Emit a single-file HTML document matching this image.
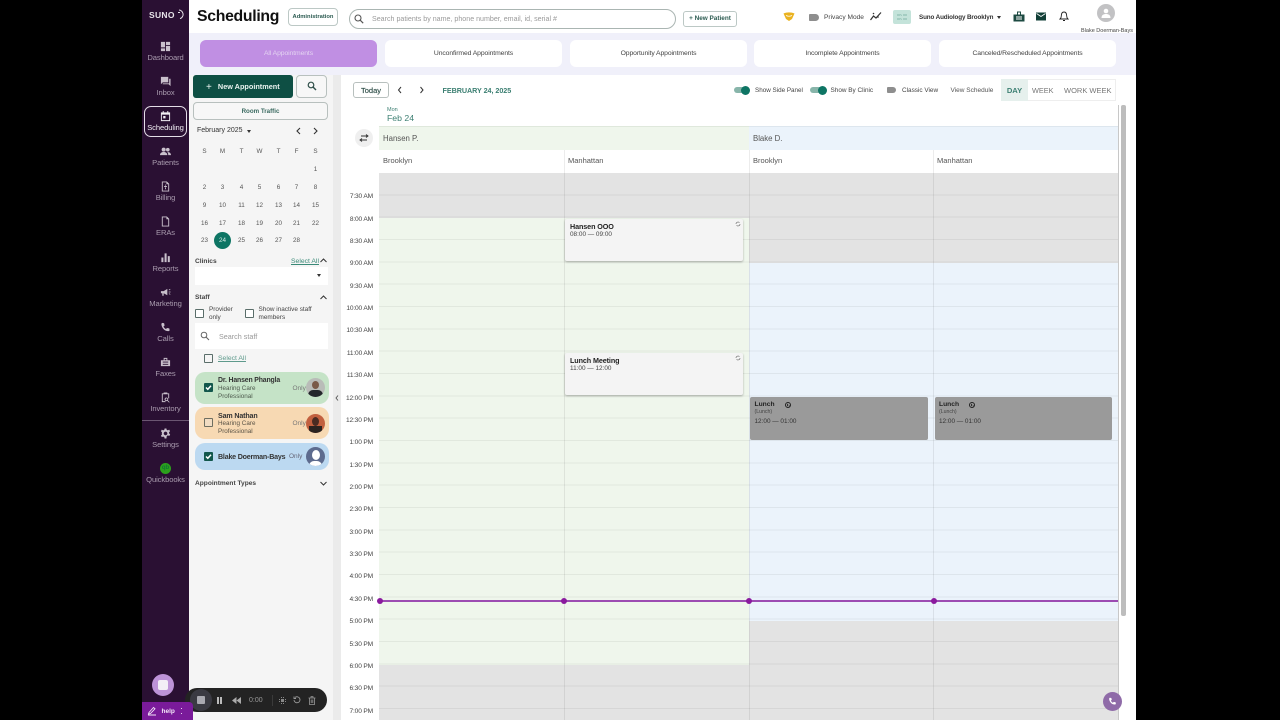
<!DOCTYPE html>
<html><head><meta charset="utf-8"><style>
*{box-sizing:border-box}
html,body{margin:0;padding:0;width:1280px;height:720px;overflow:hidden;background:#000;font-family:"Liberation Sans",sans-serif}
.a{position:absolute;white-space:nowrap}
#root{position:absolute;left:0;top:0;width:1280px;height:720px;overflow:hidden;background:#000;filter:blur(.3px)}
.nav{position:absolute;left:142px;width:47px;text-align:center;color:#a99bae;font-size:7.6px;letter-spacing:-.1px}
.nav svg{display:block;margin:0 auto 1px;width:11px;height:11px;fill:#c9c0cc}
.tab{position:absolute;top:40px;height:27px;border-radius:6px;background:#fff;text-align:center;font-size:6.8px;line-height:28px;color:#444;letter-spacing:-.1px}
.t{position:absolute;left:341px;width:32px;text-align:right;font-size:6.6px;color:#444;letter-spacing:-.15px;white-space:nowrap;margin-top:.6px}
.d{position:absolute;width:19px;text-align:center;font-size:6.3px;color:#555;margin-top:1px}
.cb{position:absolute;width:9px;height:9px;border:1.2px solid #5a6e6a;border-radius:1px;background:#fff}
.ck{background:#12574c;border-color:#12574c;color:#fff}
.ck svg{position:absolute;left:0;top:0;width:7px;height:7px;fill:none;stroke:#fff;stroke-width:1.5}
.staff{position:absolute;left:195px;width:134px;border-radius:10px}
.dot{position:absolute;top:598px;width:6px;height:6px;border-radius:50%;background:#8a1a9e}
.ev{position:absolute;border-radius:2px}
.vl{position:absolute;top:150px;width:1px;height:570px;background:rgba(0,0,0,.075)}
</style></head><body><div id="root">

<!-- sidebar -->
<div class="a" style="left:142px;top:0;width:47px;height:720px;background:#2a1033"></div>
<div class="a" style="left:149px;top:10px;font-size:8.5px;font-weight:bold;color:#e8e4ea;letter-spacing:.3px">SUNO</div>
<svg class="a" style="left:176px;top:9px" width="9" height="11" viewBox="0 0 9 11"><path d="M3 1a4.4 4.4 0 0 1 1 8.600M2 3.500h2" fill="none" stroke="#e8e4ea" stroke-width="1"/></svg>

<div class="nav" style="top:41px"><svg viewBox="0 0 12 12"><path d="M1 1h4.500v6H1zM6.500 1H11v3.500H6.500zM1 8h4.500v3H1zM6.500 5.500H11V11H6.500z"/></svg>Dashboard</div>
<div class="nav" style="top:76px"><svg viewBox="0 0 12 12"><path d="M1 1h8v6H3L1 9zM10 3h1.500v8L9.500 9H3V8h7z"/></svg>Inbox</div>
<div class="a" style="left:144px;top:106px;width:43px;height:31px;border:1.3px solid #e4dde8;border-radius:7px"></div>
<div class="nav" style="top:111px;color:#f2eef4"><svg viewBox="0 0 12 12" style="fill:#f2eef4"><path d="M3 0h1v1.500h4V0h1v1.500h2V11H1V1.500h2zM2 4v6h8V4zm1.500 1.500h2.500V8H3.500z"/></svg>Scheduling</div>
<div class="nav" style="top:146px"><svg viewBox="0 0 12 12"><circle cx="4" cy="4" r="2.200"/><circle cx="8.500" cy="4" r="2"/><path d="M0 10c0-2.500 2-3.500 4-3.500S8 7.500 8 10zM9 10c0-1.500-.4-2.500-1-3.300 2-.3 4 .8 4 3.300z"/></svg>Patients</div>
<div class="nav" style="top:181px"><svg viewBox="0 0 12 12"><path d="M2 .5h5.500L10 3v8.500H2zM3 1.500v9h6V3.500H7v-2z"/><path d="M5.500 4h1v1h-1zM4.500 5.500h3v1h-3zM5.500 7h1v2h-1z"/></svg>Billing</div>
<div class="nav" style="top:216px"><svg viewBox="0 0 12 12"><path d="M2 .5h5.500L10 3v8.500H2zM3 1.500v9h6V3.500H7v-2z"/></svg>ERAs</div>
<div class="nav" style="top:252px"><svg viewBox="0 0 12 12"><path d="M1.500 6h2.200v5H1.500zM5 1.500h2.200V11H5zM8.500 4.500h2.200V11H8.500z"/></svg>Reports</div>
<div class="nav" style="top:287px"><svg viewBox="0 0 12 12"><path d="M1 4.500h3L8 2v7L4 6.800v2.700H2.500V6.800H1zM9.500 3l1.500-1 .4.700-1.500 1zM9.500 5h2v.8h-2zM9.500 7.500l.4-.7 1.500 1-.4.700z"/></svg>Marketing</div>
<div class="nav" style="top:322px"><svg viewBox="0 0 12 12"><path d="M2.500 1l2 .4.500 2.500-1.200 1c.6 1.300 1.500 2.200 2.800 2.800l1-1.200 2.500.5.400 2c-.2.800-1 1-1.600 1C5 10 2 6.500 1.500 2.600c0-.7.400-1.400 1-1.600z"/></svg>Calls</div>
<div class="nav" style="top:357px"><svg viewBox="0 0 12 12"><path d="M4 1h4v2.500h3V10H1V3.500h3zM5 2v1.500h2V2zM3 5v1h6V5zM3 7.500v1h6v-1z"/></svg>Faxes</div>
<div class="nav" style="top:392px"><svg viewBox="0 0 12 12"><path d="M2 1.500h2V.500h4v1h2V7H9V2.500H3v7.500h3v1H2zM7 6a2 2 0 1 1-.1 0zM7 7a1 1 0 1 0 .1 0zM8.500 9l2 2-.6.600-2-2z"/></svg>Inventory</div>
<div class="a" style="left:142px;top:420px;width:47px;height:1px;background:#6b5672"></div>
<div class="nav" style="top:428px"><svg viewBox="0 0 12 12"><path fill-rule="evenodd" d="M5 .5h2l.3 1.500 1.300.6L10 1.800l1 1.700-1.100 1 .1 1.500 1.100 1-1 1.700-1.400-.7-1.300.7L7 11.500H5l-.3-1.500-1.300-.7-1.400.7-1-1.700 1.100-1L2 6l.1-1.500-1.100-1 1-1.700 1.400.8L4.700 2zM6 4a2 2 0 1 0 .1 0z"/></svg>Settings</div>
<div class="a" style="left:160px;top:463px;width:11px;height:11px;border-radius:50%;background:#2ca01c;color:#173;font-size:6px;line-height:11px;text-align:center;font-weight:bold">qb</div>
<div class="nav" style="top:475px">Quickbooks</div>

<!-- main white -->
<div class="a" style="left:189px;top:0;width:947px;height:720px;background:#fff"></div>
<div class="a" style="left:189px;top:33px;width:947px;height:42px;background:#f0f0fa"></div>
<!-- left panel -->
<div class="a" style="left:189px;top:75px;width:144px;height:645px;background:#f5f5f5"></div>
<div class="a" style="left:333px;top:75px;width:8px;height:645px;background:#ebebeb"></div>

<!-- top bar -->
<div class="a" style="left:197px;top:8px;font-size:15.800px;font-weight:bold;color:#111;letter-spacing:-.3px">Scheduling</div>
<div class="a" style="left:288px;top:8px;width:50px;height:18px;border:1px solid #bcc8c5;border-radius:4px;text-align:center;font-size:5.800px;line-height:16px;color:#2d5c52;font-weight:bold">Administration</div>
<div class="a" style="left:349px;top:9px;width:327px;height:20px;border:1px solid #aab5b2;border-radius:10px;background:#fff"></div>
<svg class="a" style="left:354px;top:14px" width="10" height="10" viewBox="0 0 10 10"><circle cx="4" cy="4" r="3" fill="none" stroke="#555" stroke-width="1.100"/><path d="M6.200 6.200l3 3" stroke="#555" stroke-width="1.200"/></svg>
<div class="a" style="left:372px;top:14.500px;font-size:7.100px;color:#9a9a9a">Search patients by name, phone number, email, id, serial #</div>
<div class="a" style="left:683px;top:11px;width:54px;height:16px;border:1px solid #bcc8c5;border-radius:3px;text-align:center;font-size:6.400px;line-height:14.500px;color:#2d5c52;font-weight:bold">+ New Patient</div>
<svg class="a" style="left:783px;top:12px" width="12" height="10" viewBox="0 0 12 10"><path d="M.5 1.500C4 0 8 0 11.500 1.500L9 7 6 9 3 7z" fill="#eab21f"/><path d="M3 3.500c2 1 4 1 6 0" stroke="#fff" fill="none" stroke-width=".7"/></svg>
<div class="a" style="left:809px;top:14px;width:10px;height:7px;border-radius:1px 4px 4px 1px;background:#8e8e8e"></div>
<div class="a" style="left:824px;top:14px;font-size:6.600px;color:#444">Privacy Mode</div>
<svg class="a" style="left:870px;top:11px" width="12" height="10" viewBox="0 0 12 10"><path d="M.5 9l3-4 2.500 2L11 1.500" stroke="#333" fill="none" stroke-width="1.200"/><circle cx="3.500" cy="2.500" r=".8" fill="#333"/><circle cx="8" cy="6" r=".8" fill="#333"/></svg>
<div class="a" style="left:893px;top:10px;width:18px;height:14px;background:#c4e3da;border-radius:2px"></div>
<svg class="a" style="left:897px;top:14px" width="10" height="6" viewBox="0 0 10 6"><path d="M0 1h3M0 5h3M6 1h4M6 5h4M3.500 .5l1 1M3.500 4.500l1 1" stroke="#6ea99b" fill="none" stroke-width=".8"/></svg>
<div class="a" style="left:919px;top:14px;font-size:6.300px;font-weight:bold;color:#333;letter-spacing:-.12px">Suno Audiology Brooklyn</div>
<div class="a" style="left:997px;top:16px;width:0;height:0;border:2.500px solid transparent;border-top:3px solid #333"></div>
<svg class="a" style="left:1013px;top:11px" width="12" height="11" viewBox="0 0 12 11"><path d="M4 .5h4v3h3.500v7H.5v-7H4zM5 1.500v2h2v-2zM3 5.500v1h6v-1zM3 7.500v1h6v-1z" fill="#1d4a42" fill-rule="evenodd"/></svg>
<svg class="a" style="left:1036px;top:12px" width="10" height="9" viewBox="0 0 10 9"><path d="M0 .5h10V8.500H0z" fill="#123f37"/><path d="M.5 1.500L5 4.500l4.500-3" stroke="#fff" fill="none" stroke-width=".8"/></svg>
<svg class="a" style="left:1059px;top:11px" width="10" height="11" viewBox="0 0 10 11"><path d="M5 1C3 1 2.300 3 2.300 5c0 1.500-.8 2.500-1.300 3h8c-.5-.5-1.300-1.500-1.300-3C7.700 3 7 1 5 1zM4 9.500h2" fill="none" stroke="#222" stroke-width=".9"/></svg>
<div class="a" style="left:1097px;top:4px;width:18px;height:18px;border-radius:50%;background:#c2c2c4"></div>
<svg class="a" style="left:1100px;top:7px" width="12" height="12" viewBox="0 0 12 12"><circle cx="6" cy="4" r="2.300" fill="#fff"/><path d="M1.500 11c0-3 2-4 4.500-4s4.500 1 4.500 4z" fill="#fff"/></svg>
<div class="a" style="left:1081px;top:28px;font-size:5.500px;color:#444">Blake Doerman-Bays</div>

<!-- tabs -->
<div class="tab" style="left:200px;width:177px;background:#c08fe3;color:#e3d3f1">All Appointments</div>
<div class="tab" style="left:385px;width:177px">Unconfirmed Appointments</div>
<div class="tab" style="left:570px;width:177px">Opportunity Appointments</div>
<div class="tab" style="left:754px;width:177px">Incomplete Appointments</div>
<div class="tab" style="left:939px;width:177px">Canceled/Rescheduled Appointments</div>

<!-- left panel content -->
<div class="a" style="left:193px;top:75px;width:100px;height:23px;background:#0e4f44;border-radius:3px;color:#e9f2ef;font-size:7.300px;font-weight:bold;line-height:24px;padding-left:13px"><span style="font-size:10px;font-weight:normal;position:relative;top:.5px">+</span>&nbsp;&nbsp;&nbsp;New Appointment</div>
<div class="a" style="left:296px;top:75px;width:31px;height:23px;border:1px solid #b8c0be;border-radius:4px;background:#f7f7f7"></div>
<svg class="a" style="left:307px;top:81px" width="10" height="10" viewBox="0 0 10 10"><circle cx="4" cy="4" r="2.800" fill="none" stroke="#2f4f49" stroke-width="1.200"/><path d="M6 6l3 3" stroke="#2f4f49" stroke-width="1.400"/></svg>
<div class="a" style="left:193px;top:102px;width:135px;height:18px;border:1px solid #b8c0be;border-radius:4px;background:#f7f7f7;text-align:center;font-size:6.200px;line-height:17px;font-weight:bold;color:#3a6a60">Room Traffic</div>

<div class="a" style="left:197px;top:127px;font-size:7px;color:#333">February 2025</div>
<div class="a" style="left:247px;top:129.500px;width:0;height:0;border:2.500px solid transparent;border-top:3px solid #333"></div>
<svg class="a" style="left:295px;top:127px" width="26" height="8" viewBox="0 0 26 8"><path d="M5 1L2 4l3 3M19 1l3 3-3 3" fill="none" stroke="#333" stroke-width="1.100"/></svg>

<div class="d" style="left:195px;top:147px">S</div><div class="d" style="left:213px;top:147px">M</div><div class="d" style="left:232px;top:147px">T</div><div class="d" style="left:250px;top:147px">W</div><div class="d" style="left:269px;top:147px">T</div><div class="d" style="left:287px;top:147px">F</div><div class="d" style="left:306px;top:147px">S</div>
<div class="d" style="left:306px;top:165px">1</div>
<div class="d" style="left:195px;top:183px">2</div><div class="d" style="left:213px;top:183px">3</div><div class="d" style="left:232px;top:183px">4</div><div class="d" style="left:250px;top:183px">5</div><div class="d" style="left:269px;top:183px">6</div><div class="d" style="left:287px;top:183px">7</div><div class="d" style="left:306px;top:183px">8</div>
<div class="d" style="left:195px;top:201px">9</div><div class="d" style="left:213px;top:201px">10</div><div class="d" style="left:232px;top:201px">11</div><div class="d" style="left:250px;top:201px">12</div><div class="d" style="left:269px;top:201px">13</div><div class="d" style="left:287px;top:201px">14</div><div class="d" style="left:306px;top:201px">15</div>
<div class="d" style="left:195px;top:218.500px">16</div><div class="d" style="left:213px;top:218.500px">17</div><div class="d" style="left:232px;top:218.500px">18</div><div class="d" style="left:250px;top:218.500px">19</div><div class="d" style="left:269px;top:218.500px">20</div><div class="d" style="left:287px;top:218.500px">21</div><div class="d" style="left:306px;top:218.500px">22</div>
<div class="d" style="left:195px;top:236px">23</div>
<div class="a" style="left:214px;top:232px;width:17px;height:17px;border-radius:50%;background:#0e7564"></div>
<div class="d" style="left:213px;top:236px;color:#d8eee9">24</div><div class="d" style="left:232px;top:236px">25</div><div class="d" style="left:250px;top:236px">26</div><div class="d" style="left:269px;top:236px">27</div><div class="d" style="left:287px;top:236px">28</div>

<div class="a" style="left:195px;top:257.500px;font-size:6.600px;font-weight:bold;color:#444">Clinics</div>
<div class="a" style="left:291px;top:257.500px;font-size:6.800px;color:#3a8a78;text-decoration:underline">Select All</div>
<svg class="a" style="left:320px;top:258px" width="7" height="5" viewBox="0 0 7 5"><path d="M.5 4l3-3 3 3" fill="none" stroke="#333" stroke-width="1"/></svg>
<div class="a" style="left:195px;top:267px;width:133px;height:18px;background:#fff"></div>
<div class="a" style="left:317px;top:274px;width:0;height:0;border:2.500px solid transparent;border-top:3px solid #333"></div>

<div class="a" style="left:195px;top:294px;font-size:6.600px;font-weight:bold;color:#444">Staff</div>
<svg class="a" style="left:320px;top:295px" width="7" height="5" viewBox="0 0 7 5"><path d="M.5 4l3-3 3 3" fill="none" stroke="#333" stroke-width="1"/></svg>
<div class="cb" style="left:195px;top:309px"></div>
<div class="a" style="left:209px;top:305.500px;font-size:6.400px;line-height:8px;color:#444">Provider<br>only</div>
<div class="cb" style="left:244.500px;top:309px"></div>
<div class="a" style="left:258.500px;top:305.500px;font-size:6.400px;line-height:8px;color:#444">Show inactive staff<br>members</div>
<div class="a" style="left:195px;top:323px;width:133px;height:26px;background:#fff"></div>
<svg class="a" style="left:200px;top:331px" width="10" height="10" viewBox="0 0 10 10"><circle cx="4" cy="4" r="2.800" fill="none" stroke="#666" stroke-width="1"/><path d="M6 6l3 3" stroke="#666" stroke-width="1.100"/></svg>
<div class="a" style="left:219px;top:332px;font-size:7.200px;color:#999">Search staff</div>
<div class="cb" style="left:204px;top:354px;background:#f5f5f5"></div>
<div class="a" style="left:218px;top:355px;font-size:6.800px;color:#5e9a8c;text-decoration:underline">Select All</div>

<div class="staff" style="top:372px;height:32px;background:#c5e3c7"></div>
<div class="cb ck" style="left:204px;top:383px"><svg viewBox="0 0 7 7"><path d="M1 3.500l1.800 1.800L6 1.800"/></svg></div>
<div class="a" style="left:218px;top:377px;font-size:6.900px;font-weight:bold;color:#333;letter-spacing:-.15px">Dr. Hansen Phangla</div>
<div class="a" style="left:218px;top:385px;font-size:6.300px;line-height:8px;color:#4d5a4d">Hearing Care<br>Professional</div>
<div class="a" style="left:292.500px;top:384.500px;font-size:6.500px;color:#777">Only</div>
<div class="a" style="left:306px;top:378px;width:19px;height:19px;border-radius:50%;background:#b9bcb8;overflow:hidden"><div style="position:absolute;left:6px;top:3px;width:7px;height:8px;border-radius:50%;background:#7a5a48"></div><div style="position:absolute;left:2px;top:12px;width:15px;height:8px;border-radius:5px 5px 0 0;background:#23272b"></div></div>

<div class="staff" style="top:407px;height:32px;background:#f7d9b3"></div>
<div class="cb" style="left:204px;top:418px;background:#f1dcc2;border-color:#6e6e60"></div>
<div class="a" style="left:218px;top:412px;font-size:7.100px;font-weight:bold;color:#333;letter-spacing:-.15px">Sam Nathan</div>
<div class="a" style="left:218px;top:420px;font-size:6.300px;line-height:8px;color:#5a5346">Hearing Care<br>Professional</div>
<div class="a" style="left:292.500px;top:419.500px;font-size:6.500px;color:#777">Only</div>
<div class="a" style="left:306px;top:414px;width:19px;height:19px;border-radius:50%;background:#c2603f;overflow:hidden"><div style="position:absolute;left:6px;top:3px;width:7px;height:9px;border-radius:50%;background:#4a2b22"></div><div style="position:absolute;left:3px;top:12px;width:13px;height:8px;background:#2b2320"></div></div>

<div class="staff" style="top:443px;height:27px;background:#bcd9f1"></div>
<div class="cb ck" style="left:204px;top:452px"><svg viewBox="0 0 7 7"><path d="M1 3.500l1.800 1.800L6 1.800"/></svg></div>
<div class="a" style="left:218px;top:452.500px;font-size:7.100px;font-weight:bold;color:#333;letter-spacing:-.2px">Blake Doerman-Bays</div>
<div class="a" style="left:289px;top:452.500px;font-size:6.500px;color:#667">Only</div>
<div class="a" style="left:306px;top:447px;width:19px;height:19px;border-radius:50%;background:#5d6b8e;overflow:hidden"><div style="position:absolute;left:5.500px;top:3px;width:8px;height:10px;border-radius:50%;background:#fff"></div><div style="position:absolute;left:3px;top:14px;width:13px;height:7px;border-radius:5px 5px 0 0;background:#fff"></div></div>

<div class="a" style="left:195px;top:479.500px;font-size:6.600px;font-weight:bold;color:#444">Appointment Types</div>
<svg class="a" style="left:320px;top:481px" width="7" height="5" viewBox="0 0 7 5"><path d="M.5 1l3 3 3-3" fill="none" stroke="#333" stroke-width="1"/></svg>
<svg class="a" style="left:335px;top:395px" width="4" height="6" viewBox="0 0 4 6"><path d="M3 .5L1 3l2 2.500" fill="none" stroke="#555" stroke-width=".9"/></svg>

<!-- calendar toolbar -->
<div class="a" style="left:353px;top:82px;width:36px;height:16px;border:1px solid #b8c0be;border-radius:3px;text-align:center;font-size:7.500px;line-height:15px;color:#2f4f49;-webkit-text-stroke:.15px #2f4f49">Today</div>
<svg class="a" style="left:397px;top:86px" width="28" height="8" viewBox="0 0 28 8"><path d="M4 1L1.500 4 4 7M23.500 1L26 4l-2.500 3" fill="none" stroke="#333" stroke-width="1"/></svg>
<div class="a" style="left:442.500px;top:86px;font-size:7.200px;color:#3c7f72;font-weight:bold;letter-spacing:-.05px">FEBRUARY 24, 2025</div>
<div class="a" style="left:734px;top:87px;width:13px;height:6px;border-radius:3px;background:#88b5aa"></div><div class="a" style="left:741px;top:85.500px;width:9px;height:9px;border-radius:50%;background:#0e7564"></div>
<div class="a" style="left:755px;top:87px;font-size:6.300px;color:#444">Show Side Panel</div>
<div class="a" style="left:810px;top:87px;width:13px;height:6px;border-radius:3px;background:#88b5aa"></div><div class="a" style="left:817.500px;top:85.500px;width:9px;height:9px;border-radius:50%;background:#0e7564"></div>
<div class="a" style="left:830.500px;top:87px;font-size:6.400px;color:#444">Show By Clinic</div>
<div class="a" style="left:887px;top:87px;width:9px;height:6px;border-radius:1px 3px 3px 1px;background:#8e8e8e"></div>
<div class="a" style="left:902px;top:87px;font-size:6.400px;color:#444">Classic View</div>
<div class="a" style="left:950.500px;top:87px;font-size:6.500px;color:#555">View Schedule</div>
<div class="a" style="left:1001px;top:79px;width:115px;height:22px;border:1px solid #eee"></div>
<div class="a" style="left:1001px;top:79px;width:27px;height:22px;background:#e6f0ed;text-align:center;font-size:7.600px;line-height:23px;font-weight:bold;color:#3c7f72">DAY</div>
<div class="a" style="left:1032px;top:86px;font-size:7.300px;color:#777">WEEK</div>
<div class="a" style="left:1064px;top:86px;font-size:7.500px;color:#777">WORK WEEK</div>

<div class="a" style="left:387px;top:106.500px;font-size:5.500px;color:#3c7f72">Mon</div>
<div class="a" style="left:387px;top:113px;font-size:8.700px;color:#3c7f72">Feb 24</div>

<!-- grid -->
<div class="a" style="left:379px;top:126px;width:370px;height:24px;background:#eff6ec;border-top:1px solid #dfe8dc"></div>
<div class="a" style="left:749px;top:126px;width:369px;height:24px;background:#ebf3fb;border-top:1px solid #dde6ee"></div>
<div class="a" style="left:383px;top:133.500px;font-size:7.800px;color:#555">Hansen P.</div>
<div class="a" style="left:753px;top:133.500px;font-size:7.800px;color:#555">Blake D.</div>
<div class="a" style="left:355px;top:129px;width:18px;height:18px;border-radius:50%;background:#efefef"></div>
<svg class="a" style="left:359px;top:134px" width="10" height="8" viewBox="0 0 10 8"><path d="M2 2h7M7 .5l2 1.500-2 1.500M8 6H1M3 4.500L1 6l2 1.500" fill="none" stroke="#333" stroke-width=".9"/></svg>
<div class="a" style="left:383px;top:156px;font-size:7.500px;color:#555">Brooklyn</div>
<div class="a" style="left:568px;top:156px;font-size:7.500px;color:#555">Manhattan</div>
<div class="a" style="left:753px;top:156px;font-size:7.500px;color:#555">Brooklyn</div>
<div class="a" style="left:937px;top:156px;font-size:7.500px;color:#555">Manhattan</div>

<div class="a" style="left:379px;top:173px;width:739px;height:547px;background:#e3e3e3"></div>
<div class="a" style="left:379px;top:218px;width:370px;height:447px;background:#eff6ec"></div>
<div class="a" style="left:749px;top:262.500px;width:369px;height:358px;background:#ebf3fb"></div>
<div class="a" style="left:379px;top:173.400px;width:739px;height:547px;background:repeating-linear-gradient(to bottom,transparent 0,transparent 21.330px,rgba(0,0,0,.06) 21.330px,rgba(0,0,0,.06) 22.330px)"></div>
<div class="vl" style="left:564px"></div><div class="vl" style="left:748.500px"></div><div class="vl" style="left:933px"></div>

<div class="t" style="top:192.500px">7:30 AM</div><div class="t" style="top:215px">8:00 AM</div><div class="t" style="top:237px">8:30 AM</div><div class="t" style="top:259.500px">9:00 AM</div><div class="t" style="top:282px">9:30 AM</div><div class="t" style="top:304.500px">10:00 AM</div><div class="t" style="top:326.500px">10:30 AM</div><div class="t" style="top:349px">11:00 AM</div><div class="t" style="top:371.500px">11:30 AM</div><div class="t" style="top:394px">12:00 PM</div><div class="t" style="top:416.500px">12:30 PM</div><div class="t" style="top:438.500px">1:00 PM</div><div class="t" style="top:461px">1:30 PM</div><div class="t" style="top:483.500px">2:00 PM</div><div class="t" style="top:505.500px">2:30 PM</div><div class="t" style="top:528px">3:00 PM</div><div class="t" style="top:550.500px">3:30 PM</div><div class="t" style="top:572.500px">4:00 PM</div><div class="t" style="top:595px">4:30 PM</div><div class="t" style="top:617.500px">5:00 PM</div><div class="t" style="top:640px">5:30 PM</div><div class="t" style="top:662px">6:00 PM</div><div class="t" style="top:684.500px">6:30 PM</div><div class="t" style="top:707px">7:00 PM</div>

<!-- events -->
<div class="ev" style="left:565px;top:219px;width:178px;height:42px;background:#f4f4f4;box-shadow:0 1px 2px rgba(0,0,0,.3)"></div>
<div class="a" style="left:570px;top:222px;font-size:7.200px;font-weight:bold;color:#222;letter-spacing:-.1px">Hansen OOO</div>
<div class="a" style="left:570px;top:231px;font-size:6.400px;color:#444">08:00 — 09:00</div>
<svg class="a" style="left:735px;top:221px" width="6" height="6" viewBox="0 0 6 6"><path d="M1 3a2 2 0 0 1 3.500-1.300M5 3a2 2 0 0 1-3.500 1.300" fill="none" stroke="#777" stroke-width=".7"/></svg>
<div class="ev" style="left:565px;top:353px;width:178px;height:42px;background:#f4f4f4;box-shadow:0 1px 2px rgba(0,0,0,.3)"></div>
<div class="a" style="left:570px;top:355.500px;font-size:7.200px;font-weight:bold;color:#222;letter-spacing:-.1px">Lunch Meeting</div>
<div class="a" style="left:570px;top:364.500px;font-size:6.400px;color:#444">11:00 — 12:00</div>
<svg class="a" style="left:735px;top:355px" width="6" height="6" viewBox="0 0 6 6"><path d="M1 3a2 2 0 0 1 3.500-1.300M5 3a2 2 0 0 1-3.500 1.300" fill="none" stroke="#777" stroke-width=".7"/></svg>

<div class="ev" style="left:750px;top:397px;width:178px;height:43px;background:#9a9a9a"></div>
<div class="a" style="left:754.500px;top:400.500px;font-size:6.700px;font-weight:bold;color:#222">Lunch</div>
<svg class="a" style="left:785px;top:401.500px" width="6" height="6" viewBox="0 0 6 6"><circle cx="3" cy="3" r="2.500" fill="#9a9a9a" stroke="#222"/><path d="M2 1.500l1.500 1.500-1.500 1.500zM4 3l.8 1-1 .8z" fill="#222"/></svg>
<div class="a" style="left:754.500px;top:409px;font-size:5.200px;color:#444">(Lunch)</div>
<div class="a" style="left:754.500px;top:418px;font-size:6.400px;color:#333">12:00 — 01:00</div>
<div class="ev" style="left:935px;top:397px;width:177px;height:43px;background:#9a9a9a"></div>
<div class="a" style="left:939px;top:400.500px;font-size:6.700px;font-weight:bold;color:#222">Lunch</div>
<svg class="a" style="left:969px;top:401.500px" width="6" height="6" viewBox="0 0 6 6"><circle cx="3" cy="3" r="2.500" fill="#9a9a9a" stroke="#222"/><path d="M2 1.500l1.500 1.500-1.500 1.500zM4 3l.8 1-1 .8z" fill="#222"/></svg>
<div class="a" style="left:939px;top:409px;font-size:5.200px;color:#444">(Lunch)</div>
<div class="a" style="left:939px;top:418px;font-size:6.400px;color:#333">12:00 — 01:00</div>

<!-- now line -->
<div class="a" style="left:379px;top:600px;width:739px;height:2px;background:#9c4cb2"></div>
<div class="dot" style="left:376.500px"></div><div class="dot" style="left:561px"></div><div class="dot" style="left:746px"></div><div class="dot" style="left:930.500px"></div>

<!-- scrollbar -->
<div class="a" style="left:1118px;top:105px;width:1px;height:615px;background:#c8c8c8"></div>
<div class="a" style="left:1121px;top:105px;width:5px;height:511px;background:#bdbdbd;border-radius:2px"></div>

<!-- phone fab -->
<div class="a" style="left:1103px;top:692px;width:19px;height:19px;border-radius:50%;background:#8f6ba8"></div>
<svg class="a" style="left:1108px;top:697px" width="9" height="9" viewBox="0 0 12 12"><path d="M2.500 1l2 .4.500 2.500-1.200 1c.6 1.300 1.500 2.200 2.800 2.800l1-1.200 2.500.5.400 2c-.2.800-1 1-1.600 1C5 10 2 6.500 1.500 2.600c0-.7.400-1.400 1-1.600z" fill="#fff"/></svg>

<!-- bottom widgets -->
<div class="a" style="left:152px;top:674px;width:22px;height:22px;border-radius:50%;background:#bd93d8"></div>
<div class="a" style="left:158px;top:680px;width:10px;height:10px;border-radius:2px;background:#f2eef6"></div>
<div class="a" style="left:185px;top:688px;width:142px;height:24px;border-radius:12px;background:#232323"></div>
<div class="a" style="left:190px;top:689px;width:22px;height:22px;border-radius:50%;background:#3a3a42"></div>
<div class="a" style="left:197px;top:696px;width:8px;height:8px;background:#a9a9b0;border-radius:1px"></div>
<div class="a" style="left:216.500px;top:697px;width:2px;height:7px;background:#bbb"></div><div class="a" style="left:220px;top:697px;width:2px;height:7px;background:#bbb"></div>
<svg class="a" style="left:232px;top:697px" width="9" height="7" viewBox="0 0 9 7"><path d="M4.500 0v7L0 3.500zM9 0v7L4.500 3.500z" fill="#aaa"/></svg>
<div class="a" style="left:249px;top:696.500px;font-size:7px;color:#999">0:00</div>
<div class="a" style="left:272px;top:695px;width:1px;height:11px;background:#3a3a3a"></div>
<svg class="a" style="left:278px;top:696px" width="9" height="9" viewBox="0 0 9 9"><path d="M1 3h1v1H1zM3 1h1v1H3zM5 1h1v1H5zM3 3h3v3H3zM7 3h1v1H7zM1 5h1v1H1zM7 5h1v1H7zM3 7h1v1H3zM5 7h1v1H5z" fill="#888"/></svg>
<svg class="a" style="left:293px;top:696px" width="8" height="8" viewBox="0 0 8 8"><path d="M2 1.500a3 3 0 1 1-1 2.500M1 .5v2h2" fill="none" stroke="#999" stroke-width=".9"/></svg>
<svg class="a" style="left:308px;top:696px" width="8" height="9" viewBox="0 0 8 9"><path d="M1.500 2h5v6.500h-5zM.5 2h7M3 2V.7h2V2M3.200 3.500v3.500M4.800 3.500v3.500" fill="none" stroke="#999" stroke-width=".8"/></svg>
<div class="a" style="left:142px;top:702px;width:51px;height:18px;background:#7a1b9a;border-radius:0 4px 0 0"></div>
<svg class="a" style="left:147px;top:706px" width="10" height="10" viewBox="0 0 10 10"><path d="M1 9h8M2 6.500L6.500 1.500l1.500 1.300L3.500 7.500 1.500 8z" fill="none" stroke="#f3e6f8" stroke-width=".9"/></svg>
<div class="a" style="left:161.500px;top:708px;font-size:6.500px;font-weight:bold;color:#f3e6f8">help</div>
<div class="a" style="left:181px;top:708px;width:1.200px;height:6px;border-top:1.200px dotted #e6cdf0;border-bottom:1.200px dotted #e6cdf0"></div>
</div></body></html>
